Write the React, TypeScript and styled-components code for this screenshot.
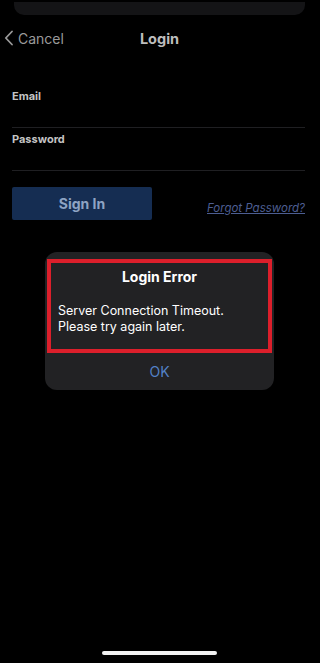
import React from "react"
import styled, { createGlobalStyle } from "styled-components"

const Global = createGlobalStyle`
  html, body {
    margin: 0;
    padding: 0;
    background: #000;
  }
  body {
    font-family: Inter, "Liberation Sans", sans-serif;
  }
`

const App = () => {
  return (
    <Page>
      <Global />
      <TopBar />
      <NavBar>
        <Back>
          <svg width="10" height="16" viewBox="0 0 10 16">
            <path d="M8 1.5 L1.8 8 L8 14.5" fill="none" stroke="#9a9a9a" strokeWidth="1.8" strokeLinecap="round" strokeLinejoin="round" />
          </svg>
          Cancel
        </Back>
        <Title>Login</Title>
      </NavBar>
      <Form>
        <Field top={39}>
          <Label>Email</Label>
          <Line />
        </Field>
        <Field top={4}>
          <Label>Password</Label>
          <Line />
        </Field>
        <Actions>
          <SignIn>Sign In</SignIn>
          <Forgot>Forgot Password?</Forgot>
        </Actions>
      </Form>
      <Indicator />

      <Alert>
        <Highlight>
          <AlertTitle>Login Error</AlertTitle>
          <Message>
            Server Connection Timeout.
            <br />
            Please try again later.
          </Message>
        </Highlight>
        <OkButton>OK</OkButton>
      </Alert>
    </Page>
  )
}

export default App

const Page = styled.div`
  position: relative;
  width: 319px;
  height: 663px;
  background: #000;
  display: flex;
  flex-direction: column;
  overflow: hidden;
`

const TopBar = styled.div`
  margin: 2px 14px 0;
  height: 13px;
  background: #141416;
  border-radius: 0 0 10px 10px;
`

const NavBar = styled.div`
  position: relative;
  height: 24px;
  margin-top: 11px;
  display: flex;
  align-items: center;
  justify-content: center;
`

const Back = styled.div`
  position: absolute;
  left: 4px;
  top: 0;
  height: 24px;
  display: flex;
  align-items: center;
  gap: 4px;
  color: #9a9a9a;
  font-size: 14px;
`

const Title = styled.div`
  color: #bdbdbd;
  font-size: 14.5px;
  font-weight: 700;
`

const Form = styled.div`
  padding: 0 14px 0 12px;
  display: flex;
  flex-direction: column;
`

const Field = styled.div<{ top: number }>`
  margin-top: ${(p) => p.top}px;
  display: flex;
  flex-direction: column;
`

const Label = styled.div`
  color: #c4c4c4;
  font-size: 11px;
  font-weight: 700;
  line-height: 14px;
`

const Line = styled.div`
  margin-top: 24px;
  height: 1px;
  background: #1f1f22;
`

const Actions = styled.div`
  margin-top: 16px;
  display: flex;
  align-items: center;
  justify-content: space-between;
`

const SignIn = styled.div`
  width: 140px;
  height: 33px;
  background: #152d52;
  border-radius: 2px;
  color: #8ea4c4;
  font-size: 14px;
  font-weight: 700;
  display: flex;
  align-items: center;
  justify-content: center;
`

const Forgot = styled.div`
  margin-top: 9px;
  color: #4d5e92;
  font-size: 11.5px;
  font-style: italic;
  text-decoration: underline;
`

const Indicator = styled.div`
  margin: auto auto 8px;
  width: 115px;
  height: 4px;
  border-radius: 2px;
  background: #f2f2f2;
`

const Alert = styled.div`
  position: absolute;
  left: 45px;
  top: 252px;
  width: 229px;
  height: 138px;
  background: #222224;
  border-radius: 12px;
  display: flex;
  flex-direction: column;
  align-items: center;
`

const Highlight = styled.div`
  margin-top: 7px;
  width: 225px;
  height: 94px;
  box-sizing: border-box;
  border: 4px solid #dc1f2b;
  padding: 5px 0 0 7px;
  display: flex;
  flex-direction: column;
`

const AlertTitle = styled.div`
  align-self: center;
  margin-left: -7px;
  color: #fff;
  font-size: 14px;
  font-weight: 700;
`

const Message = styled.div`
  margin-top: 18px;
  color: #fff;
  font-size: 12.5px;
  line-height: 16px;
`

const OkButton = styled.div`
  flex: 1;
  display: flex;
  align-items: center;
  justify-content: center;
  color: #5381c6;
  font-size: 14px;
`
